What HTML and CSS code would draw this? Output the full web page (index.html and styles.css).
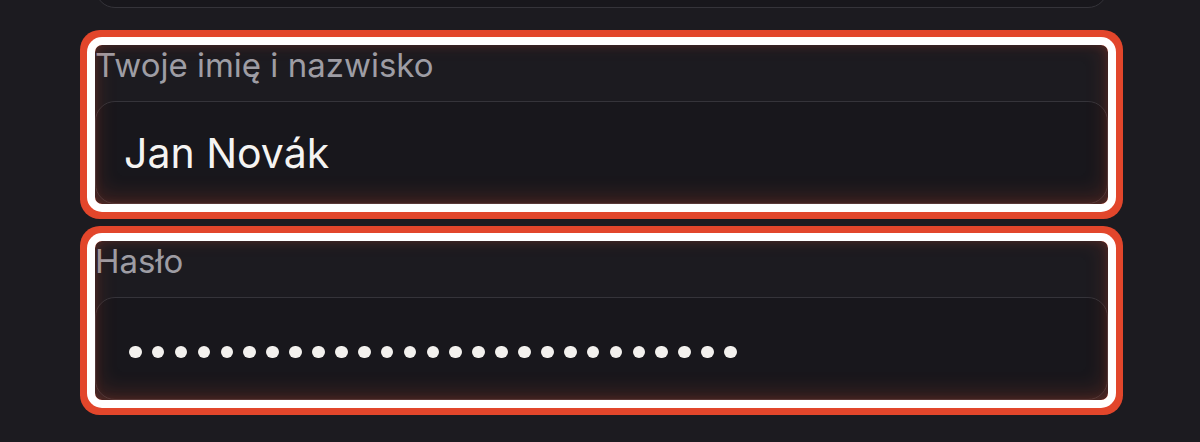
FILE: index.html
```html
<!DOCTYPE html>
<html lang="pl">
<head>
<meta charset="utf-8">
<title>Formularz</title>
<link rel="stylesheet" href="styles.css">
</head>
<body>
<form class="form">
  <div class="field">
    <div class="input"></div>
  </div>
  <div class="field highlight">
    <label class="label">Twoje imię i nazwisko</label>
    <div class="input">Jan Novák</div>
  </div>
  <div class="field highlight">
    <label class="label">Hasło</label>
    <div class="input">
      <div class="dots" aria-label="hasło">
        <i></i><i></i><i></i><i></i><i></i><i></i><i></i><i></i><i></i>
        <i></i><i></i><i></i><i></i><i></i><i></i><i></i><i></i><i></i>
        <i></i><i></i><i></i><i></i><i></i><i></i><i></i><i></i><i></i>
      </div>
    </div>
  </div>
  <div class="field">
    <label class="label">Powtórz hasło</label>
    <div class="input"></div>
  </div>
</form>
</body>
</html>
```
FILE: styles.css
```css
html, body {
  margin: 0;
  height: 100%;
  background: #1c1b20;
  overflow: hidden;
}

.form {
  display: flex;
  flex-direction: column;
  gap: 37px;
  width: 1013px;
  margin: -95px 0 0 95px;
  font-family: Inter, "Noto Sans", "Liberation Sans", sans-serif;
}

.field {
  position: relative;
  display: flex;
  flex-direction: column;
  gap: 16px;
  border-radius: 7px;
}

.label {
  font-size: 33px;
  line-height: 40px;
  color: #9e9da4;
}

.input {
  height: 103px;
  box-sizing: border-box;
  border: 1.5px solid #35343a;
  border-radius: 20px;
  background: #18171c;
  padding: 0 28px;
  display: flex;
  align-items: center;
  font-size: 41px;
  color: #f5f4f2;
}

.dots {
  display: flex;
  gap: 10.3px;
  margin: 7px 0 0 5px;
}

.dots i {
  display: block;
  width: 12.6px;
  height: 12.6px;
  border-radius: 50%;
  background: #f3f1ee;
}

.highlight::after {
  content: "";
  position: absolute;
  inset: 0;
  border-radius: 7px;
  pointer-events: none;
  z-index: 2;
  box-shadow:
    inset 0 -6px 22px rgba(226, 80, 50, 0.22),
    inset 0 0 10px rgba(226, 80, 50, 0.18),
    0 0 0 8px #ffffff,
    0 0 0 15px #e2462b;
}
```
